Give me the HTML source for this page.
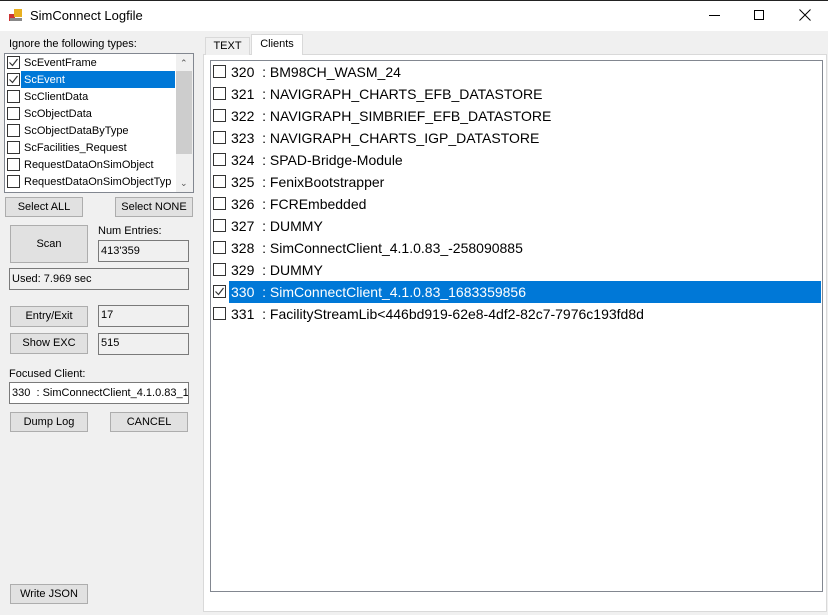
<!DOCTYPE html><html><head><style>
*{box-sizing:border-box;margin:0;padding:0}
body{width:828px;height:615px;background:#f0f0f0;font-family:"Liberation Sans",sans-serif;font-size:11px;color:#000;position:relative;overflow:hidden}
.a{position:absolute}
.btn{position:absolute;background:#e1e1e1;border:1px solid #adadad;text-align:center;font-size:11px;white-space:nowrap}
.tb{position:absolute;background:#f0f0f0;border:1px solid #7a7a7a;padding-left:2px;font-size:11px}
.cb{position:absolute;width:13px;height:13px;border:1px solid #333;background:#fff}
.li{position:absolute;left:21px;height:17px;line-height:18px;padding-left:3px;width:154px;white-space:nowrap;overflow:hidden}
.row{position:absolute;left:211px;height:22px;line-height:22px;font-size:14px;width:610px;white-space:nowrap}
.row .cb{left:2px;top:4px}
.row span{position:absolute;left:20px}
</style></head><body>
<div class="a" style="left:0;top:0;width:828px;height:31px;background:#fff;border-top:1px solid #222"></div>
<svg class="a" style="left:9px;top:8px" width="14" height="14"><rect x="0" y="6" width="6" height="7" fill="#c33"/><rect x="5" y="1" width="8" height="8" fill="#e8b020"/><rect x="1" y="10" width="12" height="3" fill="#888"/></svg>
<div class="a" style="left:30px;top:8px;font-size:13px">SimConnect Logfile</div>
<div class="a" style="left:709px;top:15px;width:11px;height:1px;background:#000"></div>
<div class="a" style="left:754px;top:10px;width:10px;height:10px;border:1px solid #000"></div>
<svg class="a" style="left:799px;top:9px" width="12" height="12"><path d="M0.5 0.5L11.5 11.5M11.5 0.5L0.5 11.5" stroke="#000"/></svg>
<div class="a" style="left:9px;top:38px">Ignore the following types:</div>
<div class="a" style="left:4px;top:53px;width:190px;height:140px;background:#fff;border:1px solid #828790"></div>
<div class="li" style="top:54px">ScEventFrame</div>
<div class="li" style="top:71px;background:#0078d7;color:#fff">ScEvent</div>
<div class="li" style="top:88px">ScClientData</div>
<div class="li" style="top:105px">ScObjectData</div>
<div class="li" style="top:122px">ScObjectDataByType</div>
<div class="li" style="top:139px">ScFacilities_Request</div>
<div class="li" style="top:156px">RequestDataOnSimObject</div>
<div class="li" style="top:173px">RequestDataOnSimObjectTyp</div>
<div class="cb" style="left:7px;top:56px"></div><div class="cb" style="left:7px;top:73px"></div>
<div class="cb" style="left:7px;top:90px"></div><div class="cb" style="left:7px;top:107px"></div>
<div class="cb" style="left:7px;top:124px"></div><div class="cb" style="left:7px;top:141px"></div>
<div class="cb" style="left:7px;top:158px"></div><div class="cb" style="left:7px;top:175px"></div>
<svg class="a" style="left:7px;top:56px" width="13" height="40"><path d="M2.5 6.5l3 3l5-6.5M2.5 23.5l3 3l5-6.5" stroke="#333" fill="none" stroke-width="1.2"/></svg>
<div class="a" style="left:176px;top:54px;width:17px;height:138px;background:#f0f0f0"></div>
<div class="a" style="left:176px;top:71px;width:16px;height:83px;background:#cdcdcd"></div>
<div class="a" style="left:180px;top:58px;font-size:9px;color:#555">&#8963;</div>
<div class="a" style="left:180px;top:178px;font-size:9px;color:#555">&#8964;</div>
<div class="btn" style="left:5px;top:197px;width:78px;height:20px;line-height:18px">Select ALL</div>
<div class="btn" style="left:115px;top:197px;width:78px;height:20px;line-height:18px">Select NONE</div>
<div class="btn" style="left:10px;top:225px;width:78px;height:38px;line-height:36px">Scan</div>
<div class="a" style="left:98px;top:225px">Num Entries:</div>
<div class="tb" style="left:98px;top:240px;width:91px;height:22px;line-height:20px">413'359</div>
<div class="tb" style="left:9px;top:268px;width:180px;height:22px;line-height:20px">Used: 7.969 sec</div>
<div class="btn" style="left:10px;top:306px;width:78px;height:21px;line-height:19px">Entry/Exit</div>
<div class="tb" style="left:98px;top:305px;width:91px;height:22px;line-height:18px">17</div>
<div class="btn" style="left:10px;top:333px;width:78px;height:21px;line-height:19px">Show EXC</div>
<div class="tb" style="left:98px;top:333px;width:91px;height:22px;line-height:18px">515</div>
<div class="a" style="left:9px;top:368px">Focused Client:</div>
<div class="tb" style="left:9px;top:382px;width:180px;height:22px;line-height:20px;background:#fff;white-space:nowrap;overflow:hidden">330&nbsp; : SimConnectClient_4.1.0.83_1</div>
<div class="btn" style="left:10px;top:412px;width:78px;height:20px;line-height:18px">Dump Log</div>
<div class="btn" style="left:110px;top:412px;width:78px;height:20px;line-height:18px">CANCEL</div>
<div class="btn" style="left:10px;top:584px;width:78px;height:20px;line-height:18px">Write JSON</div>
<div class="a" style="left:203px;top:54px;width:624px;height:558px;background:#fff;border:1px solid #d9d9d9"></div>
<div class="a" style="left:205px;top:37px;width:45px;height:18px;border:1px solid #d9d9d9;border-bottom:none;background:#f0f0f0;text-align:center;line-height:17px">TEXT</div>
<div class="a" style="left:251px;top:34px;width:52px;height:21px;border:1px solid #d9d9d9;border-bottom:none;background:#fff;text-align:center;line-height:19px">Clients</div>
<div class="a" style="left:210px;top:60px;width:613px;height:532px;border:1px solid #828790;background:#fff"></div>
<div class="row" style="top:61px"><div class="cb"></div><span>320&nbsp; : BM98CH_WASM_24</span></div>
<div class="row" style="top:83px"><div class="cb"></div><span>321&nbsp; : NAVIGRAPH_CHARTS_EFB_DATASTORE</span></div>
<div class="row" style="top:105px"><div class="cb"></div><span>322&nbsp; : NAVIGRAPH_SIMBRIEF_EFB_DATASTORE</span></div>
<div class="row" style="top:127px"><div class="cb"></div><span>323&nbsp; : NAVIGRAPH_CHARTS_IGP_DATASTORE</span></div>
<div class="row" style="top:149px"><div class="cb"></div><span>324&nbsp; : SPAD-Bridge-Module</span></div>
<div class="row" style="top:171px"><div class="cb"></div><span>325&nbsp; : FenixBootstrapper</span></div>
<div class="row" style="top:193px"><div class="cb"></div><span>326&nbsp; : FCREmbedded</span></div>
<div class="row" style="top:215px"><div class="cb"></div><span>327&nbsp; : DUMMY</span></div>
<div class="row" style="top:237px"><div class="cb"></div><span>328&nbsp; : SimConnectClient_4.1.0.83_-258090885</span></div>
<div class="row" style="top:259px"><div class="cb"></div><span>329&nbsp; : DUMMY</span></div>
<div class="row" style="top:281px"><div class="a" style="left:18px;top:0;width:592px;height:22px;background:#0078d7"></div><div class="cb"></div><svg class="a" style="left:2px;top:4px" width="13" height="13"><path d="M2.5 6.5l3 3l5-6.5" stroke="#333" fill="none" stroke-width="1.2"/></svg><span style="color:#fff">330&nbsp; : SimConnectClient_4.1.0.83_1683359856</span></div>
<div class="row" style="top:303px"><div class="cb"></div><span>331&nbsp; : FacilityStreamLib&lt;446bd919-62e8-4df2-82c7-7976c193fd8d</span></div>
</body></html>
